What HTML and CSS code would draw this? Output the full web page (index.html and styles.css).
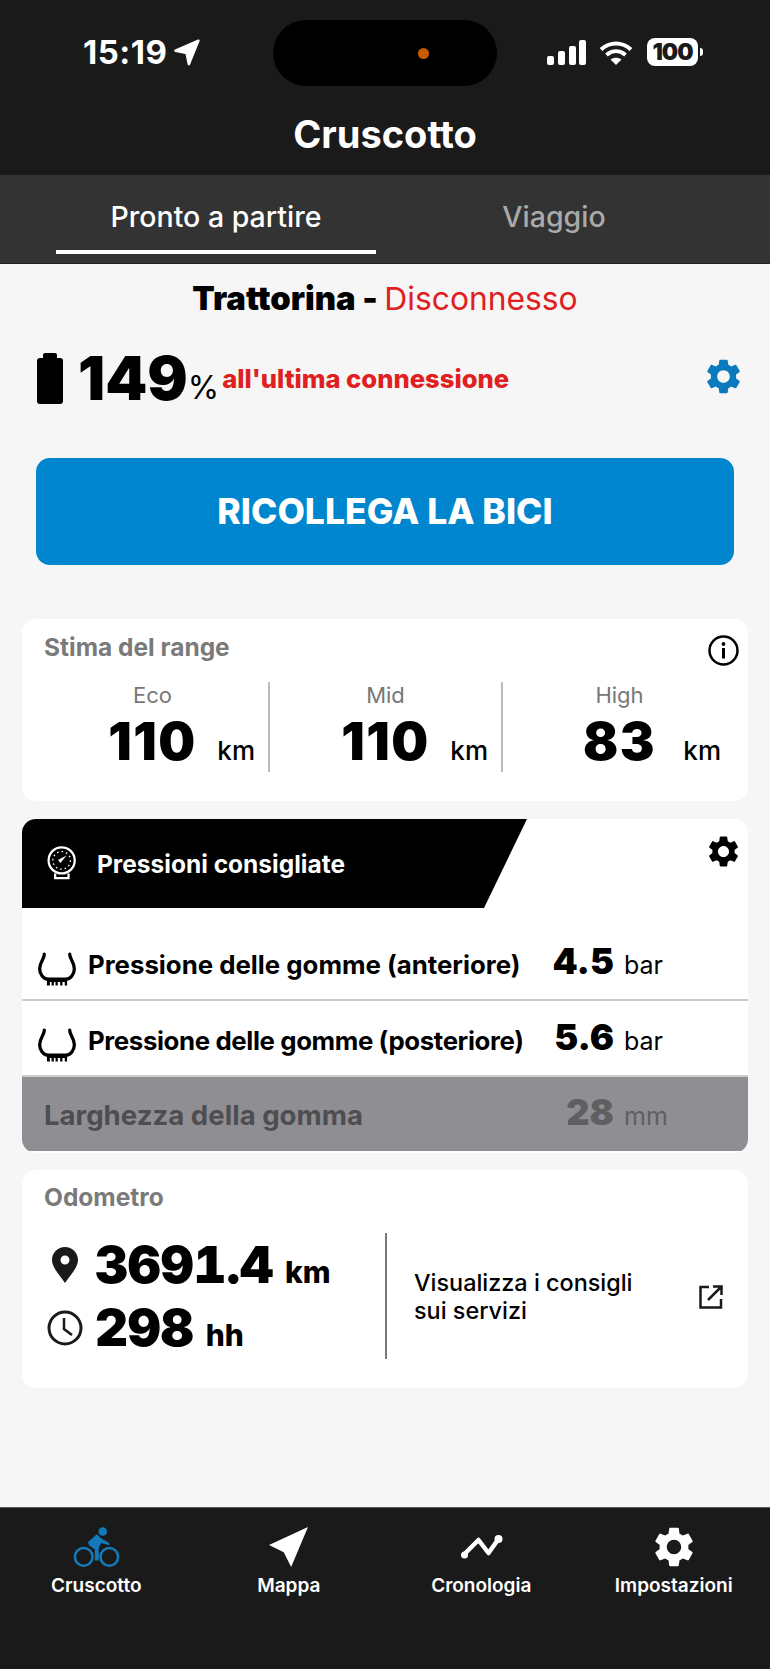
FILE: index.html
```html
<!DOCTYPE html>
<html lang="it">
<head>
    <meta charset="UTF-8">
    <meta name="viewport" content="width=device-width, initial-scale=1.0">
    <title>Cruscotto</title>
    <link rel="stylesheet" href="styles.css">
</head>
<body>
    <svg class="defs" width="0" height="0">
        <symbol id="gear" viewBox="2.6 2 18.8 20">
            <path fill-rule="evenodd" d="M19.14 12.94c.04-.3.06-.61.06-.94 0-.32-.02-.64-.07-.94l2.03-1.58c.18-.14.23-.41.12-.61l-1.92-3.32c-.12-.22-.37-.29-.59-.22l-2.39.96c-.5-.38-1.03-.7-1.62-.94l-.36-2.54c-.04-.24-.24-.41-.48-.41h-3.84c-.24 0-.43.17-.47.41l-.36 2.54c-.59.24-1.13.57-1.62.94l-2.39-.96c-.22-.08-.47 0-.59.22L2.74 8.87c-.12.21-.08.47.12.61l2.03 1.58c-.05.3-.09.63-.09.94s.02.64.07.94l-2.03 1.58c-.18.14-.23.41-.12.61l1.92 3.32c.12.22.37.29.59.22l2.39-.96c.5.38 1.03.7 1.62.94l.36 2.54c.05.24.24.41.48.41h3.84c.24 0 .44-.17.47-.41l.36-2.54c.59-.24 1.13-.56 1.62-.94l2.39.96c.22.08.47 0 .59-.22l1.92-3.32c.12-.22.07-.47-.12-.61l-2.01-1.58zM12 15.6c-1.98 0-3.6-1.62-3.6-3.6s1.62-3.6 3.6-3.6 3.6 1.62 3.6 3.6-1.62 3.6-3.6 3.6z"/>
        </symbol>
        <symbol id="tire" viewBox="55 350 115 102">
            <path d="M74 356c1 14-14 24-14 44 0 16 11 32 27 32h51c16 0 27-16 27-32 0-20-15-30-14-44" fill="none" stroke="currentColor" stroke-width="10" stroke-linecap="round"/>
            <path d="M82 428h61v23h-7v-11h-7v11h-7v-11h-7v11h-7v-11h-5v11h-7v-11h-5v11h-9z"/>
        </symbol>
    </svg>

    <header class="top">
        <div class="status">
            <div class="status-left">
                <span class="time">15:19</span>
                <svg class="loc" viewBox="0 0 26 27"><path d="M24 .6c1-.5 2 .4 1.600 1.400l-9.500 23.500c-.5 1.300-2.200 1.100-2.500-.2L11.500 15 1.300 13c-1.300-.3-1.500-2-.3-2.600z"/></svg>
            </div>
            <div class="island"><span class="island-dot"></span></div>
            <div class="status-right">
                <svg class="signal" viewBox="0 0 40 25">
                    <rect x="0" y="16" width="7" height="9" rx="2"/>
                    <rect x="11" y="11" width="7" height="14" rx="2"/>
                    <rect x="22" y="6" width="7" height="19" rx="2"/>
                    <rect x="32" y="0" width="7" height="25" rx="2"/>
                </svg>
                <svg class="wifi" viewBox="0 0 34 25">
                    <path d="M2 9.500c9-8 21-8 30 0M7.500 15c6-5 13-5 19 0" fill="none" stroke="#fff" stroke-width="4"/>
                    <path d="M11.500 19.500c3.500-2.500 7.500-2.500 11 0L17 25z"/>
                </svg>
                <div class="batt"><span class="batt-num">100</span></div>
                <span class="batt-nub"></span>
            </div>
        </div>
        <h1 class="page-title">Cruscotto</h1>
    </header>

    <nav class="tabs">
        <div class="tab active">Pronto a partire</div>
        <div class="tab">Viaggio</div>
    </nav>

    <main class="content">
        <h2 class="bike-name">Trattorina - <span class="off">Disconnesso</span></h2>

        <div class="charge">
            <svg class="batt-big" viewBox="0 0 26 51"><path d="M8 0h10a2 2 0 0 1 2 2v3h3a3 3 0 0 1 3 3v40a3 3 0 0 1-3 3H3a3 3 0 0 1-3-3V8a3 3 0 0 1 3-3h3V2a2 2 0 0 1 2-2z"/></svg>
            <span class="charge-num">149</span>
            <span class="charge-pct">%</span>
            <span class="charge-note">all'ultima connessione</span>
            <svg class="gear gear-blue"><use href="#gear"/></svg>
        </div>

        <button class="reconnect">RICOLLEGA LA BICI</button>

        <section class="card range-card">
            <div class="card-head">
                <span class="card-title">Stima del range</span>
                <svg class="info" viewBox="0 0 31 31">
                    <circle cx="15.500" cy="15.500" r="14" fill="none" stroke="#000" stroke-width="2.500"/>
                    <rect x="14" y="13" width="3" height="10.500"/>
                    <circle cx="15.500" cy="9" r="1.900"/>
                </svg>
            </div>
            <div class="range-row">
                <div class="range-col">
                    <div class="range-label">Eco</div>
                    <div class="range-value"><span></span><span class="big-num range-num">110</span><span class="range-unit">km</span></div>
                </div>
                <div class="range-col">
                    <div class="range-label">Mid</div>
                    <div class="range-value"><span></span><span class="big-num range-num">110</span><span class="range-unit">km</span></div>
                </div>
                <div class="range-col">
                    <div class="range-label">High</div>
                    <div class="range-value"><span></span><span class="big-num range-num">83</span><span class="range-unit">km</span></div>
                </div>
            </div>
        </section>

        <section class="card pressure-card">
            <div class="pressure-head">
                <div class="banner">
                    <svg class="gauge" viewBox="75 50 95 105">
                        <circle cx="123" cy="93" r="40" fill="none" stroke="#fff" stroke-width="7"/>
                        <circle cx="123" cy="93" r="27" fill="none" stroke="#fff" stroke-width="4" stroke-dasharray="5 9"/>
                        <path d="M138 78 112 92l7 9z" fill="#fff"/>
                        <path d="M103 133v14h41v-14" fill="none" stroke="#fff" stroke-width="7"/>
                    </svg>
                    <span>Pressioni consigliate</span>
                </div>
                <svg class="gear gear-black"><use href="#gear"/></svg>
            </div>
            <div class="p-row p-row-first">
                <svg class="tire"><use href="#tire"/></svg>
                <span class="p-label">Pressione delle gomme (anteriore)</span>
                <span class="p-value">4.5</span>
                <span class="p-unit">bar</span>
            </div>
            <div class="p-row p-row-second">
                <svg class="tire"><use href="#tire"/></svg>
                <span class="p-label">Pressione delle gomme (posteriore)</span>
                <span class="p-value">5.6</span>
                <span class="p-unit">bar</span>
            </div>
            <div class="p-row p-row-off">
                <span class="p-label">Larghezza della gomma</span>
                <span class="p-value">28</span>
                <span class="p-unit">mm</span>
            </div>
        </section>

        <section class="card odo-card">
            <div class="card-title odo-title">Odometro</div>
            <div class="odo-body">
                <div class="odo-left">
                    <div class="odo-row">
                        <svg class="pin" viewBox="0 0 26 36"><path fill-rule="evenodd" d="M13 0C5.800 0 0 5.800 0 13c0 8 8 15 13 23 5-8 13-15 13-23C26 5.800 20.200 0 13 0zm0 8.500a4.500 4.500 0 1 1 0 9 4.500 4.500 0 0 1 0-9z"/></svg>
                        <span class="big-num">3691.4</span>
                        <span class="odo-unit">km</span>
                    </div>
                    <div class="odo-row">
                        <svg class="clock" viewBox="0 0 36 36">
                            <circle cx="18" cy="18" r="16" fill="none" stroke="#1a1a1a" stroke-width="3"/>
                            <path d="M17 8v11l8 6" fill="none" stroke="#1a1a1a" stroke-width="2.500"/>
                        </svg>
                        <span class="big-num">298</span>
                        <span class="odo-unit">hh</span>
                    </div>
                </div>
                <div class="odo-right">
                    <span class="odo-link">Visualizza i consigli<br>sui servizi</span>
                    <svg class="ext" viewBox="0 0 24 24">
                        <path d="M10 2H1.500v20.500H22V14M22 2 9 15M14 1.500h8.500V10" fill="none" stroke="#1a1a1a" stroke-width="2.500"/>
                    </svg>
                </div>
            </div>
        </section>
    </main>

    <footer class="bottom-nav">
        <div class="nav-item">
            <svg class="nav-icon nav-bike" viewBox="40 36 142 122">
                <circle cx="130" cy="50" r="13" fill="#1479b8"/>
                <path d="M85 82l27-24 13 12 25 15v7l-25-7-7 15v38h-12v-33L88 92z" fill="#1479b8"/>
                <circle cx="72" cy="127" r="27" fill="none" stroke="#1479b8" stroke-width="8"/>
                <circle cx="150" cy="127" r="27" fill="none" stroke="#1479b8" stroke-width="8"/>
            </svg>
            <span>Cruscotto</span>
        </div>
        <div class="nav-item">
            <svg class="nav-icon nav-map" viewBox="0 0 37 38"><path d="M37 0 0 17l14 7 7 14z" fill="#fff"/></svg>
            <span>Mappa</span>
        </div>
        <div class="nav-item">
            <svg class="nav-icon nav-hist" viewBox="0 0 42 40">
                <path d="M3 28 18 13l10 13 10-14" fill="none" stroke="#fff" stroke-width="4.500" stroke-linejoin="round"/>
                <circle cx="4" cy="28" r="3.500" fill="#fff"/>
                <circle cx="38" cy="12" r="4" fill="#fff"/>
            </svg>
            <span>Cronologia</span>
        </div>
        <div class="nav-item">
            <svg class="nav-icon nav-gear"><use href="#gear"/></svg>
            <span>Impostazioni</span>
        </div>
    </footer>
</body>
</html>
```

FILE: styles.css
```css
* {
    box-sizing: border-box;
}

body {
    font-family: Inter, "Liberation Sans", sans-serif;
    background-color: #f6f6f6;
    color: #000;
    margin: 0;
    width: 770px;
    height: 1669px;
    display: flex;
    flex-direction: column;
    overflow: hidden;
}

.defs {
    position: absolute;
}

/* Barra superiore */
.top {
    background-color: #1a1a1a;
    height: 175px;
    flex-shrink: 0;
    color: #fff;
    padding-top: 20px;
}

.status {
    display: grid;
    grid-template-columns: 273px 224px 1fr;
    height: 66px;
}

.status-left {
    display: flex;
    align-items: center;
    padding: 0 0 2px 83px;
    gap: 6px;
}

.time {
    font-size: 33px;
    font-weight: 700;
    letter-spacing: 0.5px;
}

.loc {
    width: 26px;
    height: 27px;
    fill: #fff;
}

.island {
    background-color: #000;
    border-radius: 33px;
    display: flex;
    align-items: center;
    padding-left: 145px;
}

.island-dot {
    width: 11px;
    height: 11px;
    border-radius: 50%;
    background-color: #c85a00;
}

.status-right {
    display: flex;
    align-items: center;
    padding: 0 0 2px 50px;
}

.signal {
    width: 40px;
    height: 25px;
    fill: #fff;
}

.wifi {
    width: 34px;
    height: 25px;
    fill: #fff;
    margin-left: 12px;
}

.batt {
    background-color: #fff;
    border-radius: 8px;
    width: 51px;
    height: 28px;
    margin-left: 14px;
    display: flex;
    align-items: center;
    justify-content: center;
}

.batt-num {
    color: #1a1a1a;
    font-size: 23px;
    font-weight: 900;
    letter-spacing: -1px;
}

.batt-nub {
    width: 3px;
    height: 8px;
    background-color: #fff;
    border-radius: 0 3px 3px 0;
    margin-left: 2px;
}

.page-title {
    margin: 28px 0 0;
    text-align: center;
    font-size: 38px;
    line-height: 40px;
    font-weight: 700;
}

/* Abas */
.tabs {
    background-color: #333;
    height: 89px;
    flex-shrink: 0;
    display: grid;
    grid-template-columns: 320px 320px;
    column-gap: 18px;
    padding: 0 56px;
    border-bottom: 1px solid #222;
}

.tab {
    height: 79px;
    padding-top: 24px;
    line-height: 36px;
    text-align: center;
    font-size: 28.5px;
    font-weight: 500;
    color: #aaa;
}

.tab.active {
    color: #fff;
    border-bottom: 4px solid #fff;
}

.content {
    flex: 1;
}

.bike-name {
    margin: 14px 0 0;
    text-align: center;
    font-size: 32.8px;
    line-height: 40px;
    font-weight: 900;
}

.off {
    color: #e02020;
    font-size: 31.8px;
    line-height: 1;
    font-weight: 400;
}

.charge {
    display: flex;
    align-items: flex-start;
    height: 51px;
    margin-top: 35px;
    padding-left: 37px;
}

.batt-big {
    width: 26px;
    height: 51px;
    flex-shrink: 0;
}

.charge-num {
    margin-left: 15px;
    font-size: 60px;
    line-height: 50px;
    font-weight: 900;
}

.charge-pct {
    margin: 20px 0 0;
    font-size: 32px;
    line-height: 30px;
}

.charge-note {
    margin: 11px 0 0 3px;
    color: #e02020;
    font-size: 25.6px;
    line-height: 30px;
    font-weight: 800;
}

.gear {
    fill: currentColor;
}

.gear-blue {
    color: #0a7abf;
    width: 35px;
    height: 35px;
    margin: 6px 29px 0 auto;
}

.reconnect {
    display: block;
    margin: 54px 36px 0;
    width: 698px;
    height: 107px;
    background-color: #0086cf;
    color: #fff;
    border: none;
    border-radius: 14px;
    font-family: inherit;
    font-size: 35.5px;
    font-weight: 800;
}

.card {
    background-color: #fff;
    border-radius: 14px;
    margin: 0 22px;
    overflow: hidden;
}

.card-title {
    color: #7a7a7a;
    font-size: 24.5px;
    line-height: 28px;
    font-weight: 700;
}

.range-card {
    margin-top: 54px;
    height: 182px;
}

.card-head {
    display: flex;
    justify-content: space-between;
    padding: 14px 9px 0 22px;
}

.info {
    width: 31px;
    height: 31px;
    margin-top: 2px;
}

.range-row {
    display: grid;
    grid-template-columns: repeat(3, 233px);
    margin: 16px 0 0 15px;
}

.range-col {
    height: 90px;
    border-right: 2px solid #bbb;
}

.range-col:last-child {
    border-right: none;
}

.range-label {
    color: #777;
    text-align: center;
    font-size: 22px;
    line-height: 26px;
}

.range-value {
    display: grid;
    grid-template-columns: 1fr auto 1fr;
    align-items: baseline;
    margin-top: 9px;
    padding: 0 13px;
}

.range-col:last-child .range-value {
    padding: 0 15px;
}

.big-num {
    font-size: 51px;
    line-height: 50px;
    font-weight: 900;
    font-variant-numeric: tabular-nums;
}

.range-num {
    font-size: 52px;
    letter-spacing: 1.5px;
    font-variant-numeric: normal;
}

.range-unit {
    justify-self: end;
    font-size: 26px;
    font-weight: 500;
}

/* Pressioni */
.pressure-card {
    margin-top: 18px;
    height: 334px;
}

.pressure-head {
    display: flex;
    justify-content: space-between;
    height: 89px;
}

.banner {
    width: 505px;
    background-color: #000;
    clip-path: polygon(0 0, 100% 0, 462px 100%, 0 100%);
    color: #fff;
    display: flex;
    align-items: center;
    gap: 20px;
    padding-left: 24px;
    font-size: 24.5px;
    font-weight: 700;
}

.gauge {
    width: 31px;
    height: 35px;
}

.gear-black {
    color: #000;
    width: 31px;
    height: 31px;
    margin: 17px 9px 0 0;
}

.p-row {
    display: grid;
    grid-template-columns: auto 1fr 124px;
    column-gap: 10px;
    align-items: baseline;
    padding-left: 16px;
}

.p-row-first,
.p-row-second {
    grid-template-columns: 38px auto 1fr 124px;
}

.p-row-first {
    height: 93px;
    padding-top: 31px;
    border-bottom: 2px solid #ccc;
}

.p-row-second {
    height: 76px;
    padding-top: 14px;
    border-bottom: 2px solid #ccc;
}

.p-row-first .p-label,
.p-row-second .p-label {
    margin-left: 2px;
}

.p-row-second .p-label {
    letter-spacing: -0.38px;
}

.p-row-off {
    height: 74px;
    padding: 13px 0 0 22px;
    background-color: #8e8e93;
}

.tire {
    width: 38px;
    height: 34px;
    align-self: center;
    fill: #000;
    color: #000;
}

.p-label {
    font-size: 25.8px;
    font-weight: 700;
    white-space: nowrap;
}

.p-value {
    text-align: right;
    font-size: 36px;
    font-weight: 900;
}

.p-unit {
    font-size: 25px;
}

.p-row-off .p-label {
    color: #4e4e50;
    font-size: 27.6px;
}

.p-row-off .p-value {
    color: #5f5f62;
}

.p-row-off .p-unit {
    color: #5f5f62;
}

/* Odometro */
.odo-card {
    margin-top: 17px;
    height: 218px;
}

.odo-title {
    padding: 13px 0 0 22px;
}

.odo-body {
    display: grid;
    grid-template-columns: 365px 1fr;
    margin-top: 22px;
    height: 126px;
}

.odo-left {
    border-right: 2px solid #777;
    padding: 7px 0 0 25px;
    display: flex;
    flex-direction: column;
    gap: 13px;
}

.odo-row {
    display: grid;
    grid-template-columns: 36px auto auto 1fr;
    column-gap: 12px;
    align-items: baseline;
}

.pin {
    width: 26px;
    height: 36px;
    align-self: center;
    justify-self: center;
    fill: #1a1a1a;
}

.clock {
    width: 36px;
    height: 36px;
    align-self: center;
}

.odo-unit {
    font-size: 30px;
    font-weight: 800;
}

.odo-right {
    display: flex;
    align-items: center;
    justify-content: space-between;
    padding: 2px 25px 0 27px;
}

.odo-link {
    font-size: 23.4px;
    line-height: 28px;
    font-weight: 500;
}

.ext {
    width: 24px;
    height: 24px;
}

/* Menu inferiore */
.bottom-nav {
    background-color: #1a1a1a;
    border-top: 1px solid #555;
    height: 162px;
    flex-shrink: 0;
    display: grid;
    grid-template-columns: repeat(4, 1fr);
    color: #fff;
}

.nav-item {
    display: flex;
    flex-direction: column;
    align-items: center;
    font-size: 19px;
    font-weight: 600;
    line-height: 24px;
    padding-top: 19px;
}

.nav-icon {
    width: 47px;
    height: 40px;
    margin-bottom: 7px;
}

.nav-gear {
    width: 38px;
    fill: #fff;
}
```
